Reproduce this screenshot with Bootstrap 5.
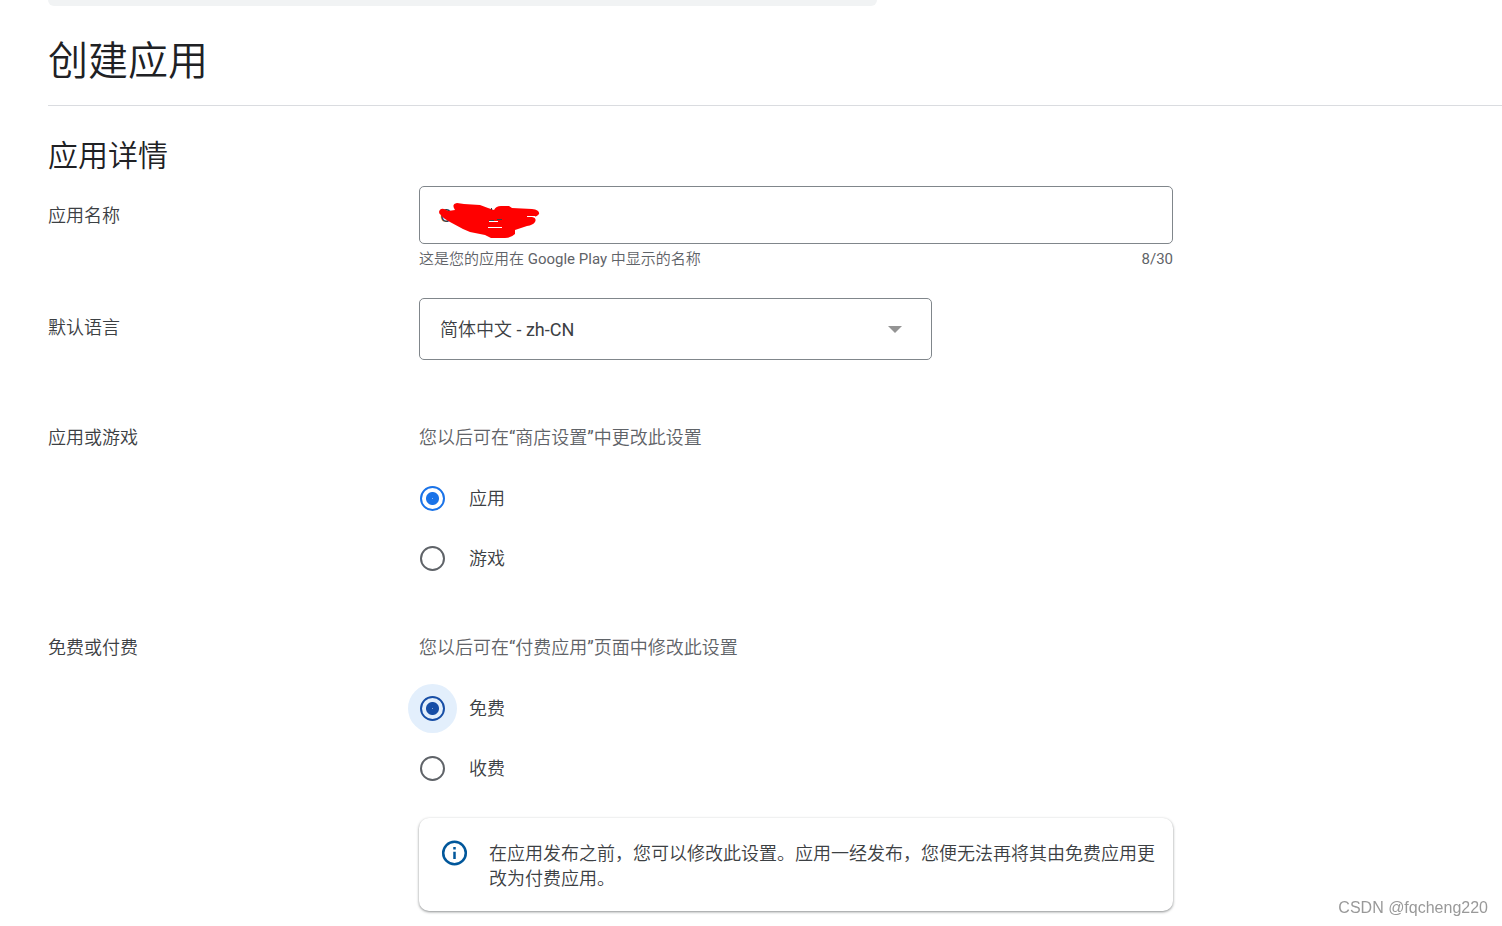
<!DOCTYPE html>
<html lang="zh-CN">
<head>
<meta charset="utf-8">
<meta name="viewport" content="width=device-width, initial-scale=1">
<title>创建应用</title>
<link href="https://cdn.jsdelivr.net/npm/bootstrap@5.3.0/dist/css/bootstrap.min.css" rel="stylesheet">
<style>
  body { font-family: Roboto, "Noto Sans CJK SC DemiLight", "Noto Sans CJK SC", sans-serif; font-size: 18px; font-weight: 400; color: #3c4043; }
  .page-main { padding: 0 0 15px 48px; }
  .notice-end { height: 6px; max-width: 829px; background: #f1f3f4; border-radius: 0 0 10px 10px; }
  .page-head { padding: 32px 0 19px; border-bottom: 1px solid #dadce0; }
  .page-head h1 { font-size: 40px; line-height: 48px; font-weight: 400; color: #202124; }
  .section-title { font-size: 30px; line-height: 36px; font-weight: 400; color: #202124; margin: 32px 0 12px; }
  .field-label { flex: 0 0 371px; line-height: 60px; }
  .field-body { flex: 0 1 754px; min-width: 0; }
  .field-gap-sm { margin-top: 24px; }
  .field-gap-md { margin-top: 30px; }
  .field-gap-lg { margin-top: 48px; }
  .app-input, .app-select { border: 1px solid #80868b; border-radius: 5px; padding: 0 20px; font-size: 18px; color: #3c4043; }
  .app-input { height: 58px; }
  .app-select { height: 62px; max-width: 513px; background-position: right 29px center; background-size: 14px 7px;
    background-image: url("data:image/svg+xml,%3Csvg xmlns='http://www.w3.org/2000/svg' viewBox='0 0 14 7'%3E%3Cpath fill='%23949494' d='M0 0h14L7 7z'/%3E%3C/svg%3E"); }
  .scribble { left: 16px; top: 12px; width: 108px; height: 44px; pointer-events: none; }
  .hint { font-size: 15px; line-height: 30px; color: #5f6368; }
  .help { line-height: 60px; color: #5f6368; }
  .choice { height: 60px; padding-left: 1px; gap: 24px; }
  .choice .form-check-input { width: 25px; height: 25px; margin: 0; float: none; border: 2px solid #5f6368; background: #fff; box-shadow: none; flex: none; }
  .choice .form-check-input:checked { border-color: #1a73e8; background: radial-gradient(circle, #8cb9f3 0, #1a73e8 1px, #1a73e8 6px, #fff 7px); }
  .choice .form-check-input.is-active:checked { border-color: #174ea6; background: radial-gradient(circle, #8ba6d2 0, #174ea6 1px, #174ea6 6px, #e3effc 7px); box-shadow: 0 0 0 12px #e3effc; }
  .info-card { margin-top: 20px; padding: 23px 10px 20px 22px; border: 0; border-radius: 10px; gap: 20px; line-height: 25px; color: #3c4043;
    box-shadow: 0 1px 3px rgba(60,64,67,.45), 0 1px 2px rgba(60,64,67,.2); }
  .watermark { right: 14px; bottom: 6px; font-family: "Liberation Sans", sans-serif; font-size: 16px; line-height: 24px; color: #999; }
</style>
</head>
<body>
<main class="page-main">
  <div class="notice-end"></div>
  <header class="page-head"><h1 class="m-0">创建应用</h1></header>
  <form>
    <h2 class="section-title">应用详情</h2>

    <div class="d-flex">
      <label class="field-label" for="appName">应用名称</label>
      <div class="field-body">
        <div class="position-relative">
          <input class="form-control app-input" id="appName" type="text" maxlength="30" value="C">
          <svg class="scribble position-absolute" viewBox="435 198 108 44" aria-hidden="true">
            <path fill="#f00" d="M439 212Q440 208 444 209L448 211 455 210Q451 204 457 203L464 204 480 205 488 208 494 210Q496 206 501 206L509 206 512 208 532 209Q540 210 539 214Q537 217 532 217Q537 218 535 222Q533 225 527 226L515 230 515 234Q511 238 505 238L491 238 485 235 470 232 463 229 450 222 445 219Q442 217 441 215Q439 214 439 212Z"/>
            <path fill="none" stroke="#fff" d="M488 227.500h14M489 221.500h9M527 216.500h8"/>
            <path fill="none" stroke="#3c4043" d="M489 220.500H494M497 219.500H502M491.500 208V210"/>
          </svg>
        </div>
        <div class="hint d-flex justify-content-between"><span>这是您的应用在 Google Play 中显示的名称</span><span>8/30</span></div>
      </div>
    </div>

    <div class="field-gap-sm d-flex">
      <label class="field-label" for="language">默认语言</label>
      <div class="field-body">
        <select class="form-select app-select" id="language"><option>简体中文 - zh-CN</option></select>
      </div>
    </div>

    <div class="field-gap-lg d-flex" role="radiogroup" aria-labelledby="kindLabel">
      <div class="field-label" id="kindLabel">应用或游戏</div>
      <div class="field-body">
        <div class="help">您以后可在“商店设置”中更改此设置</div>
        <div class="choice d-flex align-items-center">
          <input class="form-check-input" type="radio" name="kind" id="kindApp" checked><label for="kindApp">应用</label>
        </div>
        <div class="choice d-flex align-items-center">
          <input class="form-check-input" type="radio" name="kind" id="kindGame"><label for="kindGame">游戏</label>
        </div>
      </div>
    </div>

    <div class="field-gap-md d-flex" role="radiogroup" aria-labelledby="priceLabel">
      <div class="field-label" id="priceLabel">免费或付费</div>
      <div class="field-body">
        <div class="help">您以后可在“付费应用”页面中修改此设置</div>
        <div class="choice d-flex align-items-center">
          <input class="form-check-input is-active" type="radio" name="price" id="priceFree" checked><label for="priceFree">免费</label>
        </div>
        <div class="choice d-flex align-items-center">
          <input class="form-check-input" type="radio" name="price" id="pricePaid"><label for="pricePaid">收费</label>
        </div>
        <div class="card info-card flex-row align-items-start">
          <svg class="flex-shrink-0" width="28" height="25" viewBox="0 0 28 25" overflow="visible" aria-hidden="true">
            <circle cx="13.500" cy="12" r="11.300" fill="none" stroke="#01579b" stroke-width="2.500"/>
            <path fill="#01579b" d="M12.250 6h2.500v2.500h-2.500zM12.250 10.700h2.500V18h-2.500z"/>
          </svg>
          <div>在应用发布之前，您可以修改此设置。应用一经发布，您便无法再将其由免费应用更改为付费应用。</div>
        </div>
      </div>
    </div>
  </form>
</main>
<div class="watermark position-fixed">CSDN @fqcheng220</div>
<script src="https://cdn.jsdelivr.net/npm/bootstrap@5.3.0/dist/js/bootstrap.bundle.min.js"></script>
</body>
</html>
